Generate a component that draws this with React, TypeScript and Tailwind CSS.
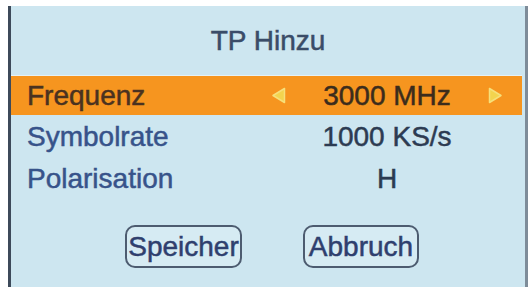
import React from "react";

const font = { fontFamily: '"Liberation Sans", Arial, sans-serif' };

function LeftArrow() {
  return (
    <svg width="15" height="17" viewBox="0 0 15 17" className="shrink-0">
      <polygon points="13.5,1.5 13.5,15.5 2,8.5" fill="#f3d44e" stroke="#f6e07a" strokeWidth="1.5" strokeLinejoin="round" />
    </svg>
  );
}

function RightArrow() {
  return (
    <svg width="15" height="17" viewBox="0 0 15 17" className="shrink-0">
      <polygon points="1.5,1.5 1.5,15.5 13,8.5" fill="#f3d44e" stroke="#f6e07a" strokeWidth="1.5" strokeLinejoin="round" />
    </svg>
  );
}

function Row({ label, value, active }: { label: string; value: string; active?: boolean }) {
  return (
    <div
      className={
        active
          ? "flex h-[40px] items-center border-t border-[#e6f2f7] bg-[#f6951f] pl-[16px] mr-[3px]"
          : "flex h-[42px] items-center pl-[16px] mr-[3px]"
      }
    >
      <div
        className={
          "w-[244px] text-[28px] leading-[32px] [-webkit-text-stroke:0.5px_currentColor] " +
          (active ? "text-[#4a3220]" : "text-[#37538a]")
        }
      >
        {label}
      </div>
      <div className="w-[15px] flex items-center justify-center">{active ? <LeftArrow /> : null}</div>
      <div
        className={
          "w-[202px] text-center text-[28px] leading-[32px] [-webkit-text-stroke:0.5px_currentColor] " +
          (active ? "text-[#3b2c1c]" : "text-[#2c3b52]")
        }
      >
        {value}
      </div>
      <div className="w-[15px] flex items-center justify-center">{active ? <RightArrow /> : null}</div>
    </div>
  );
}

export default function App() {
  return (
    <div className="w-[532px] h-[287px] bg-white overflow-hidden pl-[8px] pr-[4px] pt-[6px]" style={font}>
      <div className="h-full bg-[#cde6f0] border-l-[3px] border-l-[#3d4a5a] border-r-[3px] border-r-[#7e8c99] flex flex-col">
        <div className="h-[69px] flex items-center justify-center text-[28px] leading-[32px] text-[#3a4c68] [-webkit-text-stroke:0.5px_currentColor]">
          TP Hinzu
        </div>
        <Row label="Frequenz" value="3000 MHz" active />
        <div className="h-[1px]" />
        <Row label="Symbolrate" value="1000 KS/s" />
        <Row label="Polarisation" value="H" />
        <div className="flex mt-[25px] pl-[114px] gap-[61px]">
          <div className="w-[117px] h-[43px] rounded-[10px] border-2 border-[#4d5c70] bg-[#d6ebf3] flex items-center justify-center text-[28px] leading-[32px] text-[#2f3f6e] [-webkit-text-stroke:0.5px_currentColor]">
            Speicher
          </div>
          <div className="w-[116px] h-[43px] rounded-[10px] border-2 border-[#4d5c70] bg-[#d6ebf3] flex items-center justify-center text-[28px] leading-[32px] text-[#2f3f6e] [-webkit-text-stroke:0.5px_currentColor]">
            Abbruch
          </div>
        </div>
      </div>
    </div>
  );
}
